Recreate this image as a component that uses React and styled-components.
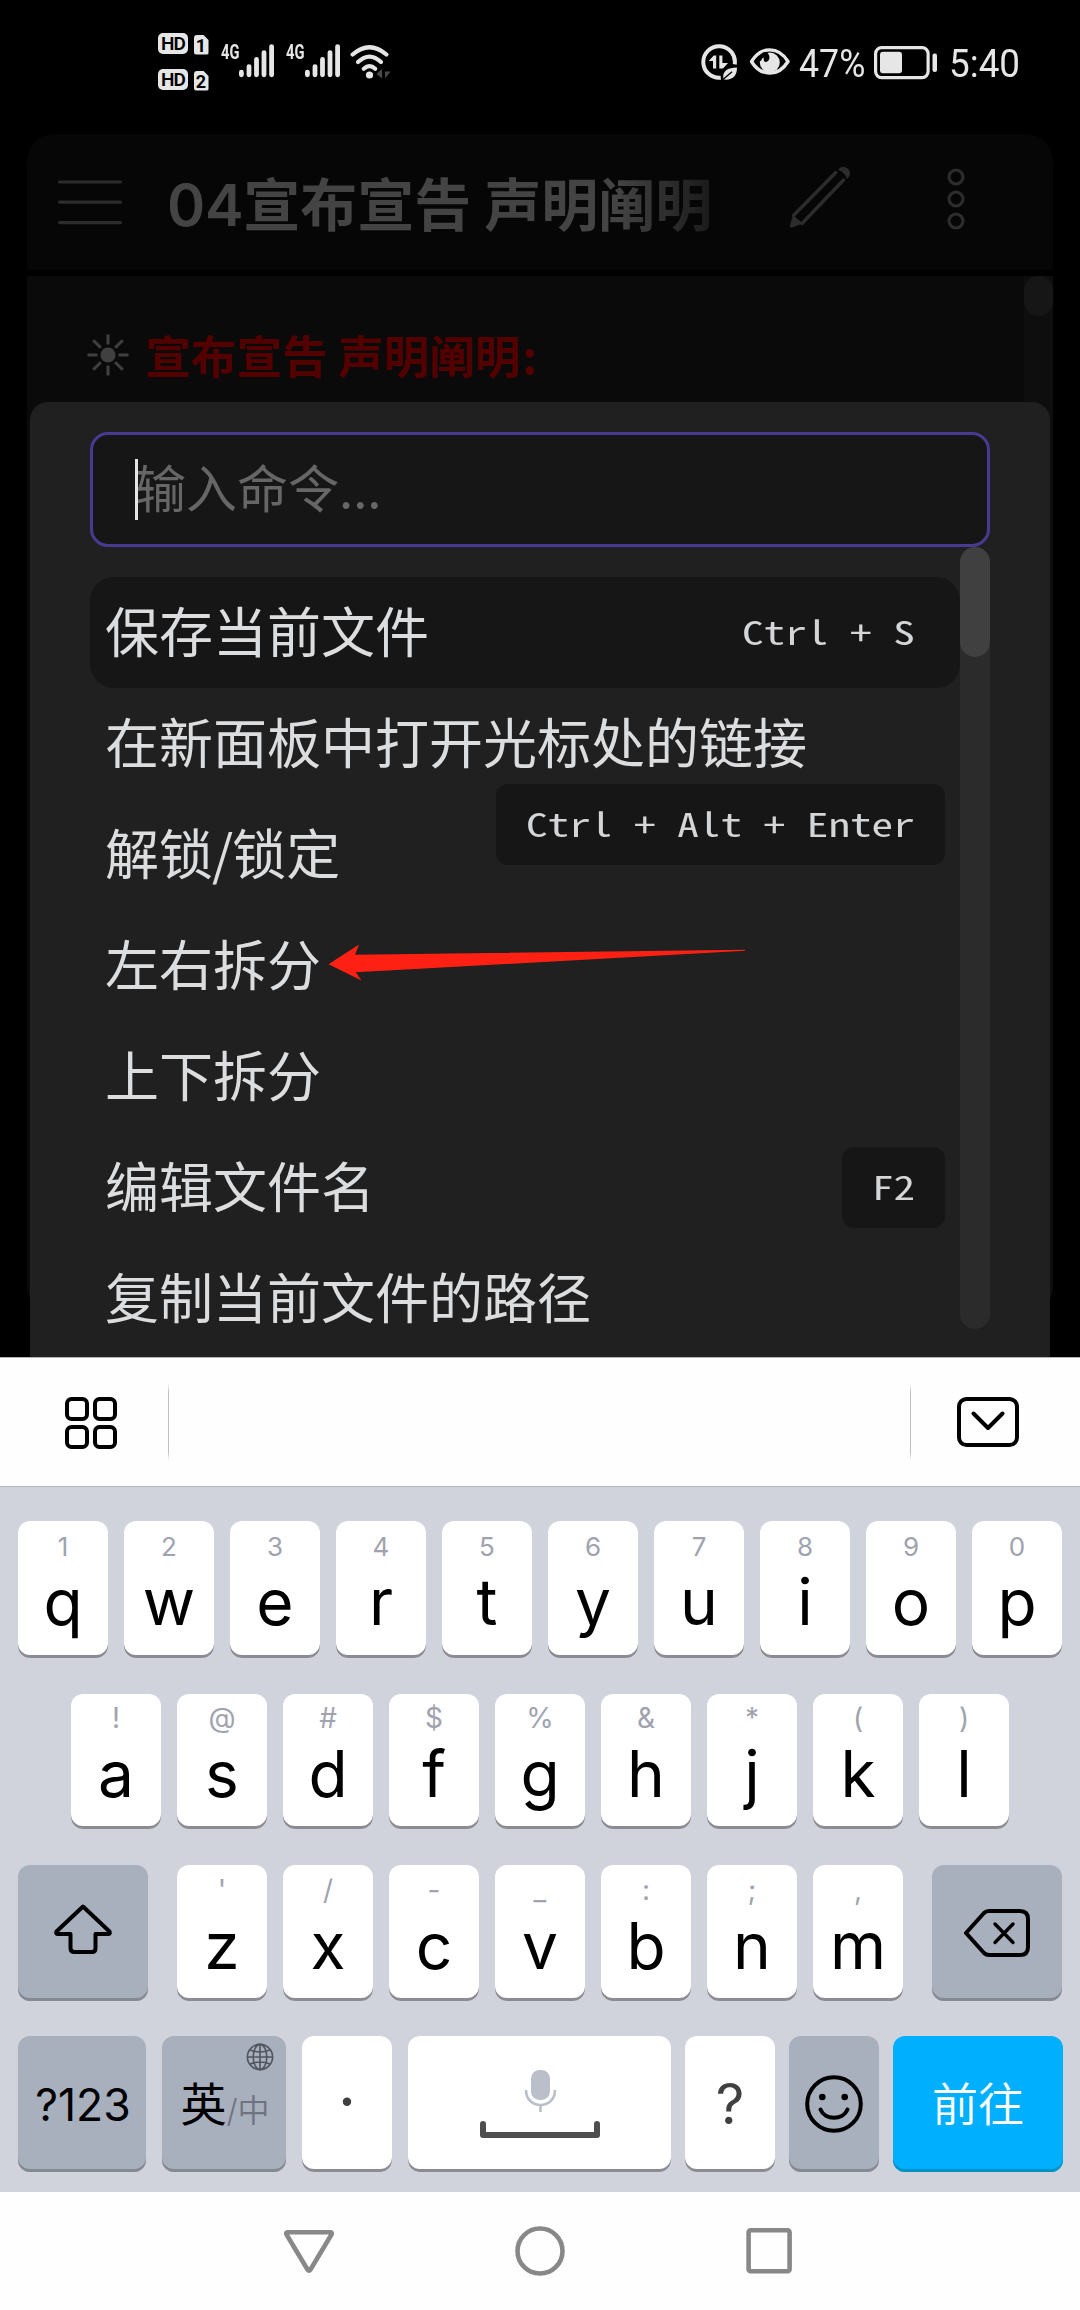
import React from "react";
import styled, { createGlobalStyle } from "styled-components";

const GlobalStyle = createGlobalStyle`
  *, *::before, *::after { box-sizing: border-box; }
  body { margin: 0; background: #000; }
  svg { display: block; flex: none; }
`;

const CJK = `"Noto Sans CJK SC", sans-serif`;
const LATIN = `Inter, "Noto Sans CJK SC", sans-serif`;
const MONO = `"Noto Sans Mono CJK SC", "Liberation Mono", monospace`;

const Screen = styled.div`
  width: 1080px;
  height: 2310px;
  display: flex;
  flex-direction: column;
  overflow: hidden;
  background: #000;
  font-family: ${CJK};
`;

/* ---------- status bar ---------- */

const StatusBar = styled.header`
  flex: none;
  height: 134px;
  padding: 33px 60px 0 158px;
  display: flex;
  justify-content: space-between;
  align-items: flex-start;
  color: #e6e6e6;
`;

const StatusGroup = styled.div`
  display: flex;
  align-items: flex-start;
  height: 60px;
`;

const SimStack = styled.div`
  display: flex;
  flex-direction: column;
  gap: 15px;
  margin-right: 12px;
`;

const SimRow = styled.div`
  display: flex;
  gap: 5.5px;
  height: 21px;
`;

const HdBadge = styled.span`
  width: 30px;
  height: 21px;
  border-radius: 5px;
  background: #e6e6e6;
  color: #000;
  font: 600 19px/21px Roboto, sans-serif;
  letter-spacing: -0.8px;
  text-align: center;
`;

const SimBadge = styled.span`
  width: 15px;
  height: 20px;
  margin-top: 1.500px;
  border-radius: 3px;
  background: #e6e6e6;
  clip-path: polygon(0 0, 64% 0, 100% 28%, 100% 100%, 0 100%);
  color: #000;
  font: 700 18px/21px Roboto, sans-serif;
  text-align: center;
`;

const Signal = styled.div`
  display: flex;
  margin: 11px 11px 0 0;
`;

const Generation = styled.span`
  width: 18.5px;
  font: 700 21px/17px Roboto, sans-serif;
  white-space: nowrap;
  transform: scaleX(0.7);
  transform-origin: left;
`;

const StatusText = styled.span`
  width: ${(p) => p.$width}px;
  margin-top: 9px;
  font: 400 38px/44px Roboto, sans-serif;
  white-space: nowrap;
  transform: scaleX(${(p) => p.$squeeze});
  transform-origin: left;
`;

const IconSlot = styled.span`
  display: block;
  margin: ${(p) => p.$margin};
`;

/* ---------- note behind the palette ---------- */

const Workspace = styled.main`
  position: relative;
  flex: none;
  height: 1223px;
`;

const Note = styled.section`
  margin: 0 27px;
  height: 1180px;
  display: flex;
  flex-direction: column;
  gap: 6px;
  border-radius: 27px;
  overflow: hidden;
`;

const NoteHeader = styled.div`
  flex: none;
  height: 136px;
  display: flex;
  align-items: center;
  padding-left: 31px;
  background: #060606;
`;

const NoteTitle = styled.h1`
  width: 568px;
  margin: 1px 0 0 45px;
  font: 700 57px/80px ${CJK};
  color: #444;
  white-space: nowrap;
  overflow: hidden;
  mask-image: linear-gradient(to right, #000 450px, rgba(0, 0, 0, 0.35) 542px);
`;

const TitleNumber = styled.span`
  font: 600 58px/80px ${LATIN};
  letter-spacing: -0.3px;
`;

const NoteBody = styled.div`
  flex: 1;
  display: flex;
  justify-content: space-between;
  background: #0a0a0a;
`;

const NoteLine = styled.div`
  display: flex;
  align-items: center;
  gap: 16px;
  height: 60px;
  margin: 49px 0 0 60px;
  color: #520000;
  font: 700 45.6px/56px ${CJK};
  white-space: nowrap;
`;

const RedText = styled.span`
  padding-bottom: 3px;
`;

const Colon = styled.span`
  margin-left: 2px;
`;

const NoteScroll = styled.div`
  width: 29px;
  background: #0e0e0e;
`;

const NoteThumb = styled.div`
  height: 40px;
  border-radius: 15px;
  background: #161616;
`;

/* ---------- command palette ---------- */

const Palette = styled.section`
  position: absolute;
  top: 268px;
  left: 30px;
  right: 30px;
  bottom: 0;
  padding: 30px 60px 0;
  border-radius: 18px 18px 0 0;
  background: #202020;
`;

const Prompt = styled.div`
  display: flex;
  align-items: center;
  height: 115px;
  padding-left: 42px;
  border: 3px solid #483a92;
  border-radius: 18px;
  background: #161616;
  color: #666;
  font: 400 51px/61px ${CJK};
`;

const PromptText = styled.span`
  padding-bottom: 6px;
`;

const Caret = styled.span`
  width: 3px;
  height: 61px;
  margin-right: -3px;
  background: #e4e4e4;
  z-index: 1;
`;

const ListArea = styled.div`
  display: flex;
  height: 782px;
`;

const List = styled.ul`
  flex: 1;
  margin: 0;
  padding: 30px 0 0;
  list-style: none;
`;

const Command = styled.li`
  position: relative;
  display: flex;
  align-items: center;
  height: 111px;
  padding: 0 15px 5px;
  border-radius: 24px;
  background: ${(p) => (p.$active ? "#161616" : "transparent")};
  color: #dcdddf;
  font: 400 54px/60px ${CJK};
  white-space: nowrap;
`;

const Slash = styled.span`
  margin: 0 -1px;
`;

const Hotkey = styled.kbd`
  position: absolute;
  top: ${(p) => (p.$wrapped ? 96 : 15)}px;
  right: 15px;
  width: ${(p) => p.$chars * 21.6 + 60}px;
  height: 81px;
  padding-left: 30px;
  border-radius: 12px;
  background: #161616;
  color: #d4d5d7;
  font: 400 33px/79px ${MONO};
  white-space: pre;
  z-index: 1;
`;

const HotkeyText = styled.span`
  display: inline-block;
  transform: scaleX(1.309);
  transform-origin: left;
`;

const ScrollTrack = styled.div`
  width: 30px;
  border-radius: 15px;
  background: #2b2b2b;
`;

const ScrollThumb = styled.div`
  height: 110px;
  border-radius: 15px;
  background: #404040;
`;

const Pointer = styled.svg`
  position: absolute;
  left: 328px;
  top: 808px;
`;

/* ---------- keyboard ---------- */

const Toolbar = styled.div`
  flex: none;
  height: 130px;
  display: flex;
  align-items: center;
  padding: 0 61px 0 65px;
  border-top: 1px solid #b4b4b4;
  border-bottom: 1px solid #b4b7bd;
  background: #fefefe;
`;

const Divider = styled.span`
  width: 1px;
  height: 78px;
  background: linear-gradient(transparent, #c0c0c4 12%, #c0c0c4 88%, transparent);
`;

const Stretch = styled.span`
  flex: 1;
`;

const Keyboard = styled.section`
  flex: none;
  height: 705px;
  display: flex;
  flex-direction: column;
  padding-top: 34px;
  background: #d0d3dc;
`;

const KeyRow = styled.div`
  display: flex;
  gap: ${(p) => p.$gap || 16}px;
  height: ${(p) => p.$height}px;
  margin-bottom: ${(p) => p.$after}px;
  padding-left: ${(p) => p.$inset}px;
`;

const tones = {
  light: ["#fff", "#8b8c93"],
  dark: ["#a8afbd", "#858991"],
  accent: ["#00b0ff", "#0793c2"],
};

const Key = styled.div`
  flex: none;
  width: ${(p) => p.$width || 90}px;
  height: 100%;
  display: flex;
  flex-direction: ${(p) => (p.$row ? "row" : "column")};
  align-items: center;
  justify-content: ${(p) => (p.$center ? "center" : "flex-start")};
  position: relative;
  padding-top: ${(p) => p.$top || 0}px;
  margin-right: ${(p) => p.$right || 0}px;
  border-radius: 12px;
  background: ${(p) => tones[p.$tone || "light"][0]};
  box-shadow: inset 0 -3px 0 ${(p) => tones[p.$tone || "light"][1]};
  color: #000;
`;

const Hint = styled.span`
  height: 32px;
  font: 400 ${(p) => p.$size}px/32px ${LATIN};
  color: #a0a3af;
`;

const Letter = styled.span`
  height: 64px;
  margin-top: ${(p) => p.$shift}px;
  font: 400 64px/64px ${LATIN};
`;

const KeyLabel = styled.span`
  font: ${(p) => p.$weight || 400} ${(p) => p.$size}px/60px ${LATIN};
  color: ${(p) => p.$color || "#000"};
  margin: ${(p) => p.$margin || 0};
`;

const Globe = styled.span`
  position: absolute;
  top: 7px;
  right: 12px;
`;

const NavBar = styled.nav`
  flex: 1;
  display: flex;
  justify-content: space-between;
  padding: 34px 286px 0 283px;
  background: #fefefe;
`;

/* ---------- icons ---------- */

const SignalBars = () => (
  <svg width="36" height="34" viewBox="0 0 36 34" stroke="#e6e6e6" strokeWidth="4.8" strokeLinecap="round">
    <path d="M2.4 28.2v2.6M10 22.6v8.2M17.5 15.5v15.3M25 8.6v22.2M32.6 2.6v28.2" />
  </svg>
);

const WifiIcon = () => (
  <svg width="42" height="34" viewBox="0 0 42 34" fill="none" stroke="#e6e6e6" strokeWidth="4.2" strokeLinecap="round">
    <path d="M2.6 9.5Q19.5-5 36.400 9.500" />
    <path d="M8 17Q19.500 6.200 31 17" />
    <path d="M13.800 23.800Q19.500 18.400 25.200 23.800" />
    <circle cx="19.5" cy="30" r="3.6" fill="#e6e6e6" stroke="none" />
    <path d="M26.500 29L32 24V33.500M35 24V33.500L40.500 26.500H35" stroke="none" fill="#484848" />
  </svg>
);

const DataSaverIcon = () => (
  <svg width="38" height="38" viewBox="0 0 38 38" fill="#e6e6e6">
    <path d="M19.800 33.700A15.800 15.800 0 1 1 33.700 20.400" fill="none" stroke="#e6e6e6" strokeWidth="4" />
    <path d="M7.700 16.900L12.700 11.500H15.200V24.500H12V16.900Z" />
    <path d="M18.300 11.500H21.400V19H27L22 24.500H18.300Z" />
    <path d="M22.600 35.500C20.500 27 27 23.500 36 23.500C36 32 31.500 36.500 22.600 35.500Z" />
    <path d="M22 35.500L31 27.800" stroke="#000" strokeWidth="1.400" />
  </svg>
);

const EyeIcon = () => (
  <svg width="42" height="30" viewBox="0 0 42 30">
    <path d="M2.500 14.500C12-1 29.500-1 39 14.500C29.500 30 12 30 2.500 14.500Z" fill="none" stroke="#e6e6e6" strokeWidth="3.400" strokeLinejoin="round" />
    <circle cx="20.800" cy="15.500" r="10" fill="#e6e6e6" />
    <path d="M10.500 13.500C10 6 16 3.500 18.500 6C22 9.500 20.500 15 16.800 15C14.500 15 14.500 12 14.800 10.500C13 11 12.500 12.500 12 14Z" fill="#000" />
  </svg>
);

const BatteryIcon = () => (
  <svg width="64" height="34" viewBox="0 0 64 34" fill="#e6e6e6">
    <rect x="1.600" y="1.600" width="52.500" height="30" rx="6" fill="none" stroke="#e6e6e6" strokeWidth="3.200" />
    <rect x="6" y="5.800" width="22" height="21.500" rx="3" />
    <rect x="58.500" y="7.500" width="4.500" height="18.500" rx="2" />
  </svg>
);

const MenuIcon = () => (
  <svg width="64" height="46" viewBox="0 0 64 46" stroke="#2c2c2c" strokeWidth="3.200" strokeLinecap="round">
    <path d="M1.600 3h60.800M1.600 23.200h60.800M1.600 43.600h60.800" />
  </svg>
);

const PencilIcon = () => (
  <svg width="62" height="62" viewBox="0 0 62 62" fill="none" stroke="#2c2c2c" strokeWidth="3.400" strokeLinecap="round">
    <path d="M46.800 6.500L4.500 49.500M54.500 14L13 57.500" />
    <path d="M0.500 61L4 49L8 52.500L14 57.500L3 61.500Z" fill="#2c2c2c" stroke="none" />
    <path d="M49 3.800Q53-1.500 58.500 2.200Q63.500 7 58.500 12.800Q57 12.500 56.500 9.500Q53 5 49 3.800Z" fill="#2c2c2c" stroke="none" />
  </svg>
);

const MoreIcon = () => (
  <svg width="18" height="64" viewBox="0 0 18 64" fill="none" stroke="#2c2c2c" strokeWidth="3.200">
    <circle cx="9" cy="10" r="7" />
    <circle cx="9" cy="32" r="7" />
    <circle cx="9" cy="54" r="7" />
  </svg>
);

const SunIcon = () => (
  <svg width="42" height="42" viewBox="0 0 42 42" stroke="#404040" strokeWidth="3">
    <circle cx="21" cy="21" r="7.600" fill="#404040" stroke="none" />
    <path d="M21 .5v10M21 31.500v10M.5 21h10M31.500 21h10M6.200 6.200l7.600 7.600M28.200 28.200l7.600 7.600M35.800 6.200l-7.600 7.600M13.800 28.200l-7.600 7.600" />
  </svg>
);

const AppsIcon = () => (
  <svg width="52" height="54" viewBox="0 -2 52 54" fill="none" stroke="#000" strokeWidth="4">
    <rect x="2" y="2" width="20" height="20" rx="4.500" />
    <rect x="30" y="2" width="20" height="20" rx="4.500" />
    <rect x="2" y="30" width="20" height="20" rx="4.500" />
    <rect x="30" y="30" width="20" height="20" rx="4.500" />
  </svg>
);

const CollapseIcon = () => (
  <svg width="62" height="50" viewBox="0 0 62 50" fill="none" stroke="#000" strokeWidth="4" strokeLinecap="round" strokeLinejoin="round">
    <rect x="2" y="2" width="58" height="46" rx="7.500" />
    <path d="M16.500 16.500L31 31L45.500 16.500" />
  </svg>
);

const ShiftIcon = () => (
  <svg width="58" height="52" viewBox="0 0 58 52" fill="none" stroke="#000" strokeWidth="4" strokeLinejoin="round">
    <path d="M29 3.500L55.500 28.500Q56.500 31 54 31H41.500V45Q41.500 49 38 49H20.500Q16.500 49 16.500 45V31H4Q1.500 31 2.500 28.500Z" />
  </svg>
);

const BackspaceIcon = () => (
  <svg width="68" height="50" viewBox="0 0 68 50" fill="none" stroke="#000" strokeWidth="4" strokeLinecap="round" strokeLinejoin="round">
    <path d="M3 25L21 5Q23 3 26 3H57Q65 3 65 11V39Q65 47 57 47H26Q23 47 21 45Z" />
    <path d="M32 16L50 34.500M50 16L32 34.500" strokeWidth="3.400" />
  </svg>
);

const GlobeIcon = () => (
  <svg width="28" height="28" viewBox="0 0 28 28" fill="none" stroke="#50555e" strokeWidth="1.600">
    <circle cx="14" cy="14" r="12.600" />
    <ellipse cx="14" cy="14" rx="6.800" ry="12.600" />
    <path d="M14 1.400V26.600M1.400 14H26.600M4 7Q14 11 24 7M4 21Q14 17 24 21" />
  </svg>
);

const SpaceIcon = () => (
  <svg width="120" height="70" viewBox="0 0 120 70" fill="none">
    <rect x="51" y="0" width="19" height="30" rx="8.500" fill="#babfc9" />
    <path d="M46 20C46 40 75 40 75 20M60.500 35V42" stroke="#babfc9" strokeWidth="2.600" />
    <path d="M3 54V65H117V54" stroke="#4e4e4e" strokeWidth="6" strokeLinecap="round" strokeLinejoin="round" />
  </svg>
);

const SmileIcon = () => (
  <svg width="58" height="58" viewBox="0 0 58 58" fill="none" stroke="#000" strokeWidth="4" strokeLinecap="round">
    <circle cx="29" cy="29" r="26.800" />
    <circle cx="17.300" cy="22" r="3.300" fill="#000" stroke="none" />
    <circle cx="39.700" cy="22" r="3.300" fill="#000" stroke="none" />
    <path d="M15.500 34.500C20 45.500 38 45.500 42.500 34.500" />
  </svg>
);

const BackIcon = () => (
  <svg width="52" height="50" viewBox="0 0 52 50" fill="none" stroke="#888" strokeWidth="4.600" strokeLinejoin="round">
    <path d="M4.500 6.300H47.500Q49.500 6.300 48.500 8.500L27.500 43.500Q26 45.800 24.500 43.500L3.500 8.500Q2.500 6.300 4.500 6.300Z" />
  </svg>
);

const HomeIcon = () => (
  <svg width="52" height="52" viewBox="1 0 52 52" fill="none" stroke="#888" strokeWidth="4.600">
    <circle cx="26" cy="25" r="22.500" />
  </svg>
);

const RecentsIcon = () => (
  <svg width="48" height="50" viewBox="0 0 48 50" fill="none" stroke="#888" strokeWidth="4.600">
    <rect x="2.600" y="4.300" width="41" height="41" rx="2" />
  </svg>
);

/* ---------- content ---------- */

const commands = [
  { label: "保存当前文件", hotkey: "Ctrl + S", active: true },
  { label: "在新面板中打开光标处的链接", hotkey: "Ctrl + Alt + Enter", wrapped: true },
  { label: <>解锁<Slash>/</Slash>锁定</> },
  { label: "左右拆分" },
  { label: "上下拆分" },
  { label: "编辑文件名", hotkey: "F2" },
  { label: "复制当前文件的路径" },
];

const rowOne = ["q1", "w2", "e3", "r4", "t5", "y6", "u7", "i8", "o9", "p0"];
const rowTwo = ["a!", "s@", "d#", "f$", "g%", "h&", "j*", "k(", "l)"];
const rowThree = ["z'", "x/", "c-", "v_", "b:", "n;", "m,"];

const LetterKey = ({ pair, top, shift, hintSize, right }) => (
  <Key $top={top} $right={right}>
    <Hint $size={hintSize}>{pair[1]}</Hint>
    <Letter $shift={shift}>{pair[0]}</Letter>
  </Key>
);

export default function App() {
  return (
    <Screen>
      <GlobalStyle />
      <StatusBar>
        <StatusGroup>
          <SimStack>
            {["1", "2"].map((n) => (
              <SimRow key={n}>
                <HdBadge>HD</HdBadge>
                <SimBadge>{n}</SimBadge>
              </SimRow>
            ))}
          </SimStack>
          {[0, 1].map((n) => (
            <Signal key={n}>
              <Generation>4G</Generation>
              <SignalBars />
            </Signal>
          ))}
          <IconSlot $margin="12px 0 0 -2px"><WifiIcon /></IconSlot>
        </StatusGroup>
        <StatusGroup>
          <IconSlot $margin="11px 10px 0 0"><DataSaverIcon /></IconSlot>
          <IconSlot $margin="14px 8px 0 0"><EyeIcon /></IconSlot>
          <StatusText $width={75} $squeeze={0.94}>47%</StatusText>
          <IconSlot $margin="13px 11px 0 0"><BatteryIcon /></IconSlot>
          <StatusText $width={71} $squeeze={0.97}>5:40</StatusText>
        </StatusGroup>
      </StatusBar>

      <Workspace>
        <Note>
          <NoteHeader>
            <MenuIcon />
            <NoteTitle><TitleNumber>04</TitleNumber>宣布宣告 声明阐明</NoteTitle>
            <IconSlot $margin="0 96px 11px 54px"><PencilIcon /></IconSlot>
            <IconSlot $margin="0 0 6px 0"><MoreIcon /></IconSlot>
          </NoteHeader>
          <NoteBody>
            <NoteLine>
              <SunIcon />
              <RedText>宣布宣告 声明阐明<Colon>:</Colon></RedText>
            </NoteLine>
            <NoteScroll><NoteThumb /></NoteScroll>
          </NoteBody>
        </Note>

        <Palette>
          <Prompt><Caret /><PromptText>输入命令...</PromptText></Prompt>
          <ListArea>
            <List>
              {commands.map((c, i) => (
                <Command key={i} $active={c.active}>
                  <span>{c.label}</span>
                  {c.hotkey && (
                    <Hotkey $wrapped={c.wrapped} $chars={c.hotkey.length}>
                      <HotkeyText>{c.hotkey}</HotkeyText>
                    </Hotkey>
                  )}
                </Command>
              ))}
            </List>
            <ScrollTrack><ScrollThumb /></ScrollTrack>
          </ListArea>
        </Palette>

        <Pointer width="420" height="42" viewBox="328 942 420 42">
          <path d="M328.500 964.300L359 944.500L355 954.700L745 949.800V950.800L355.700 972.300L361.500 980.500Z" fill="#ff2014" />
        </Pointer>
      </Workspace>

      <Toolbar>
        <AppsIcon />
        <IconSlot $margin="0 0 0 51px"><Divider as="div" /></IconSlot>
        <Stretch />
        <IconSlot $margin="0 46px 0 0"><Divider as="div" /></IconSlot>
        <CollapseIcon />
      </Toolbar>

      <Keyboard>
        <KeyRow $height={137} $after={36} $inset={18}>
          {rowOne.map((p) => <LetterKey key={p} pair={p} top={10} shift={7} hintSize={26} />)}
        </KeyRow>
        <KeyRow $height={135} $after={36} $inset={71}>
          {rowTwo.map((p) => <LetterKey key={p} pair={p} top={8} shift={8} hintSize={28} />)}
        </KeyRow>
        <KeyRow $height={136} $after={35} $inset={18}>
          <Key $width={130} $tone="dark" $top={38} $right={13}><ShiftIcon /></Key>
          {rowThree.map((p) => (
            <LetterKey key={p} pair={p} top={9} shift={8} hintSize={28} right={p === "m," ? 13 : 0} />
          ))}
          <Key $width={130} $tone="dark" $top={43}><BackspaceIcon /></Key>
        </KeyRow>
        <KeyRow $height={136} $after={0} $inset={18}>
          <Key $width={128} $tone="dark" $center><KeyLabel $size={44.5} $margin="1px 0 0 2px">?123</KeyLabel></Key>
          <Key $width={124} $tone="dark" $row $center>
            <Globe><GlobeIcon /></Globe>
            <KeyLabel $size={46} $margin="0 0 0 2px">英</KeyLabel>
            <KeyLabel $size={32} $weight={350} $color="#6e747f" $margin="13px 0 0">/中</KeyLabel>
          </Key>
          <Key $center><KeyLabel $size={64} $color="#404040" $margin="0 0 6px">·</KeyLabel></Key>
          <Key $width={263} $top={34} $right={-2}><SpaceIcon /></Key>
          <Key $center $right={-2}><KeyLabel $size={56} $color="#404040">?</KeyLabel></Key>
          <Key $tone="dark" $top={39} $right={-2}><SmileIcon /></Key>
          <Key $width={170} $tone="accent" $center><KeyLabel $size={46} $weight={350} $color="#fff">前往</KeyLabel></Key>
        </KeyRow>
      </Keyboard>

      <NavBar>
        <BackIcon />
        <HomeIcon />
        <RecentsIcon />
      </NavBar>
    </Screen>
  );
}
